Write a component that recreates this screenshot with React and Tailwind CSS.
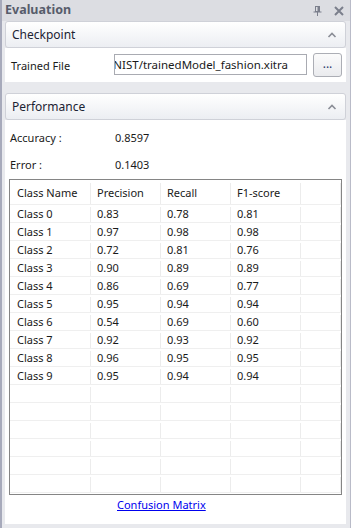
import React from 'react';

const rows = [
  ['Class 0', '0.83', '0.78', '0.81'],
  ['Class 1', '0.97', '0.98', '0.98'],
  ['Class 2', '0.72', '0.81', '0.76'],
  ['Class 3', '0.90', '0.89', '0.89'],
  ['Class 4', '0.86', '0.69', '0.77'],
  ['Class 5', '0.95', '0.94', '0.94'],
  ['Class 6', '0.54', '0.69', '0.60'],
  ['Class 7', '0.92', '0.93', '0.92'],
  ['Class 8', '0.96', '0.95', '0.95'],
  ['Class 9', '0.95', '0.94', '0.94'],
];

const Chevron = () => (
  <svg width="10" height="6" viewBox="0 0 10 6" className="mr-[8px]">
    <polyline points="1.5,5 5,1.5 8.5,5" fill="none" stroke="#8a8d96" strokeWidth="1.6" />
  </svg>
);

const GroupHeader = ({ title }) => (
  <div className="h-[27px] shrink-0 flex items-center justify-between rounded-[3px] border border-[#cfd1d8] bg-gradient-to-b from-[#ffffff] to-[#eceef2] pl-[6px] text-[12px] text-[#1c2333]">
    <span className="pt-[1px]">{title}</span>
    <Chevron />
  </div>
);

const Row = ({ cells, header }) => (
  <div className={`flex shrink-0 border-b border-[#efefef] ${header ? 'h-[25px] pt-[3px]' : 'h-[18px] pt-[2px]'}`}>
    {[81, 70, 70, 70, 40].map((w, i) => (
      <div
        key={i}
        style={{ width: w }}
        className={`shrink-0 flex items-center whitespace-nowrap border-r border-[#ececec] ${i === 0 ? 'pl-[7px]' : 'pl-[6px]'}`}
      >
        {cells[i] || ''}
      </div>
    ))}
  </div>
);

export default function App() {
  const empties = Array.from({ length: 6 });
  return (
    <div
      className="w-[351px] h-[528px] flex flex-col overflow-hidden bg-[#e8e9ed] border-l-2 border-r border-l-[#a7aabb] border-r-[#b9bbc8] text-[11px] text-[#1a1a1a]"
      style={{ fontFamily: '"Noto Sans", "Open Sans", sans-serif' }}
    >
      {/* title bar */}
      <div className="h-[21px] shrink-0 flex items-center justify-between pl-[3px] pr-[6px] bg-[#dcdde2]">
        <span className="font-bold text-[12.5px] text-[#575c6b]">Evaluation</span>
        <div className="flex items-center gap-[12px]">
          <svg width="9" height="10" viewBox="0 0 9 10">
            <rect x="2.5" y="0.5" width="4" height="5" fill="none" stroke="#7b7f8c" />
            <rect x="4.5" y="0.5" width="2" height="5" fill="#7b7f8c" />
            <line x1="0.5" y1="6" x2="8.5" y2="6" stroke="#7b7f8c" />
            <line x1="4.5" y1="6" x2="4.5" y2="10" stroke="#7b7f8c" />
          </svg>
          <svg width="10" height="10" viewBox="0 0 10 10">
            <path d="M1 1L9 9M9 1L1 9" stroke="#7b7f8c" strokeWidth="2" />
          </svg>
        </div>
      </div>

      <div className="flex-1 flex flex-col pl-[3px] pr-[4px]">
        <GroupHeader title="Checkpoint" />
        <div className="h-[34px] shrink-0 bg-white flex items-start pt-[6px]">
          <span className="w-[109px] pl-[6px] pt-[4px]">Trained File</span>
          <div className="w-[193px] h-[21px] border border-[#a9abb2] bg-white flex items-center justify-end overflow-hidden pr-[18px] pt-[1px] whitespace-nowrap text-[11.5px]">
            <span>MNIST/trainedModel_fashion.xitra</span>
          </div>
          <button className="ml-[6px] -mt-[1px] w-[29px] h-[24px] rounded-[3px] border border-[#acaeb5] bg-gradient-to-b from-[#fbfbfb] to-[#eaebee] text-[12px] leading-none text-[#2b3a6b] flex items-center justify-center pb-[2px]">
            ...
          </button>
        </div>

        <div className="h-[11px] shrink-0" />
        <GroupHeader title="Performance" />

        <div className="flex-1 bg-white flex flex-col pt-[4px]">
          <div className="h-[27px] flex items-center pt-[2px]">
            <span className="w-[110px] pl-[5px]">Accuracy :</span>
            <span>0.8597</span>
          </div>
          <div className="h-[27px] flex items-center pt-[2px]">
            <span className="w-[110px] pl-[5px]">Error :</span>
            <span>0.1403</span>
          </div>
          <div className="mt-[1px] ml-[4px] w-[333px] h-[316px] border border-[#858585] flex flex-col overflow-hidden">
            <Row header cells={['Class Name', 'Precision', 'Recall', 'F1-score']} />
            {rows.map((r) => (
              <Row key={r[0]} cells={r} />
            ))}
            {empties.map((_, i) => (
              <Row key={'e' + i} cells={[]} />
            ))}
            <Row cells={[]} />
          </div>
          <div className="h-[20px] flex items-center pl-[112px] pt-[1px]">
            <a href="#" className="text-[#0000ee] underline">Confusion Matrix</a>
          </div>
        </div>
      </div>
      <div className="h-[4px] shrink-0" />
    </div>
  );
}
